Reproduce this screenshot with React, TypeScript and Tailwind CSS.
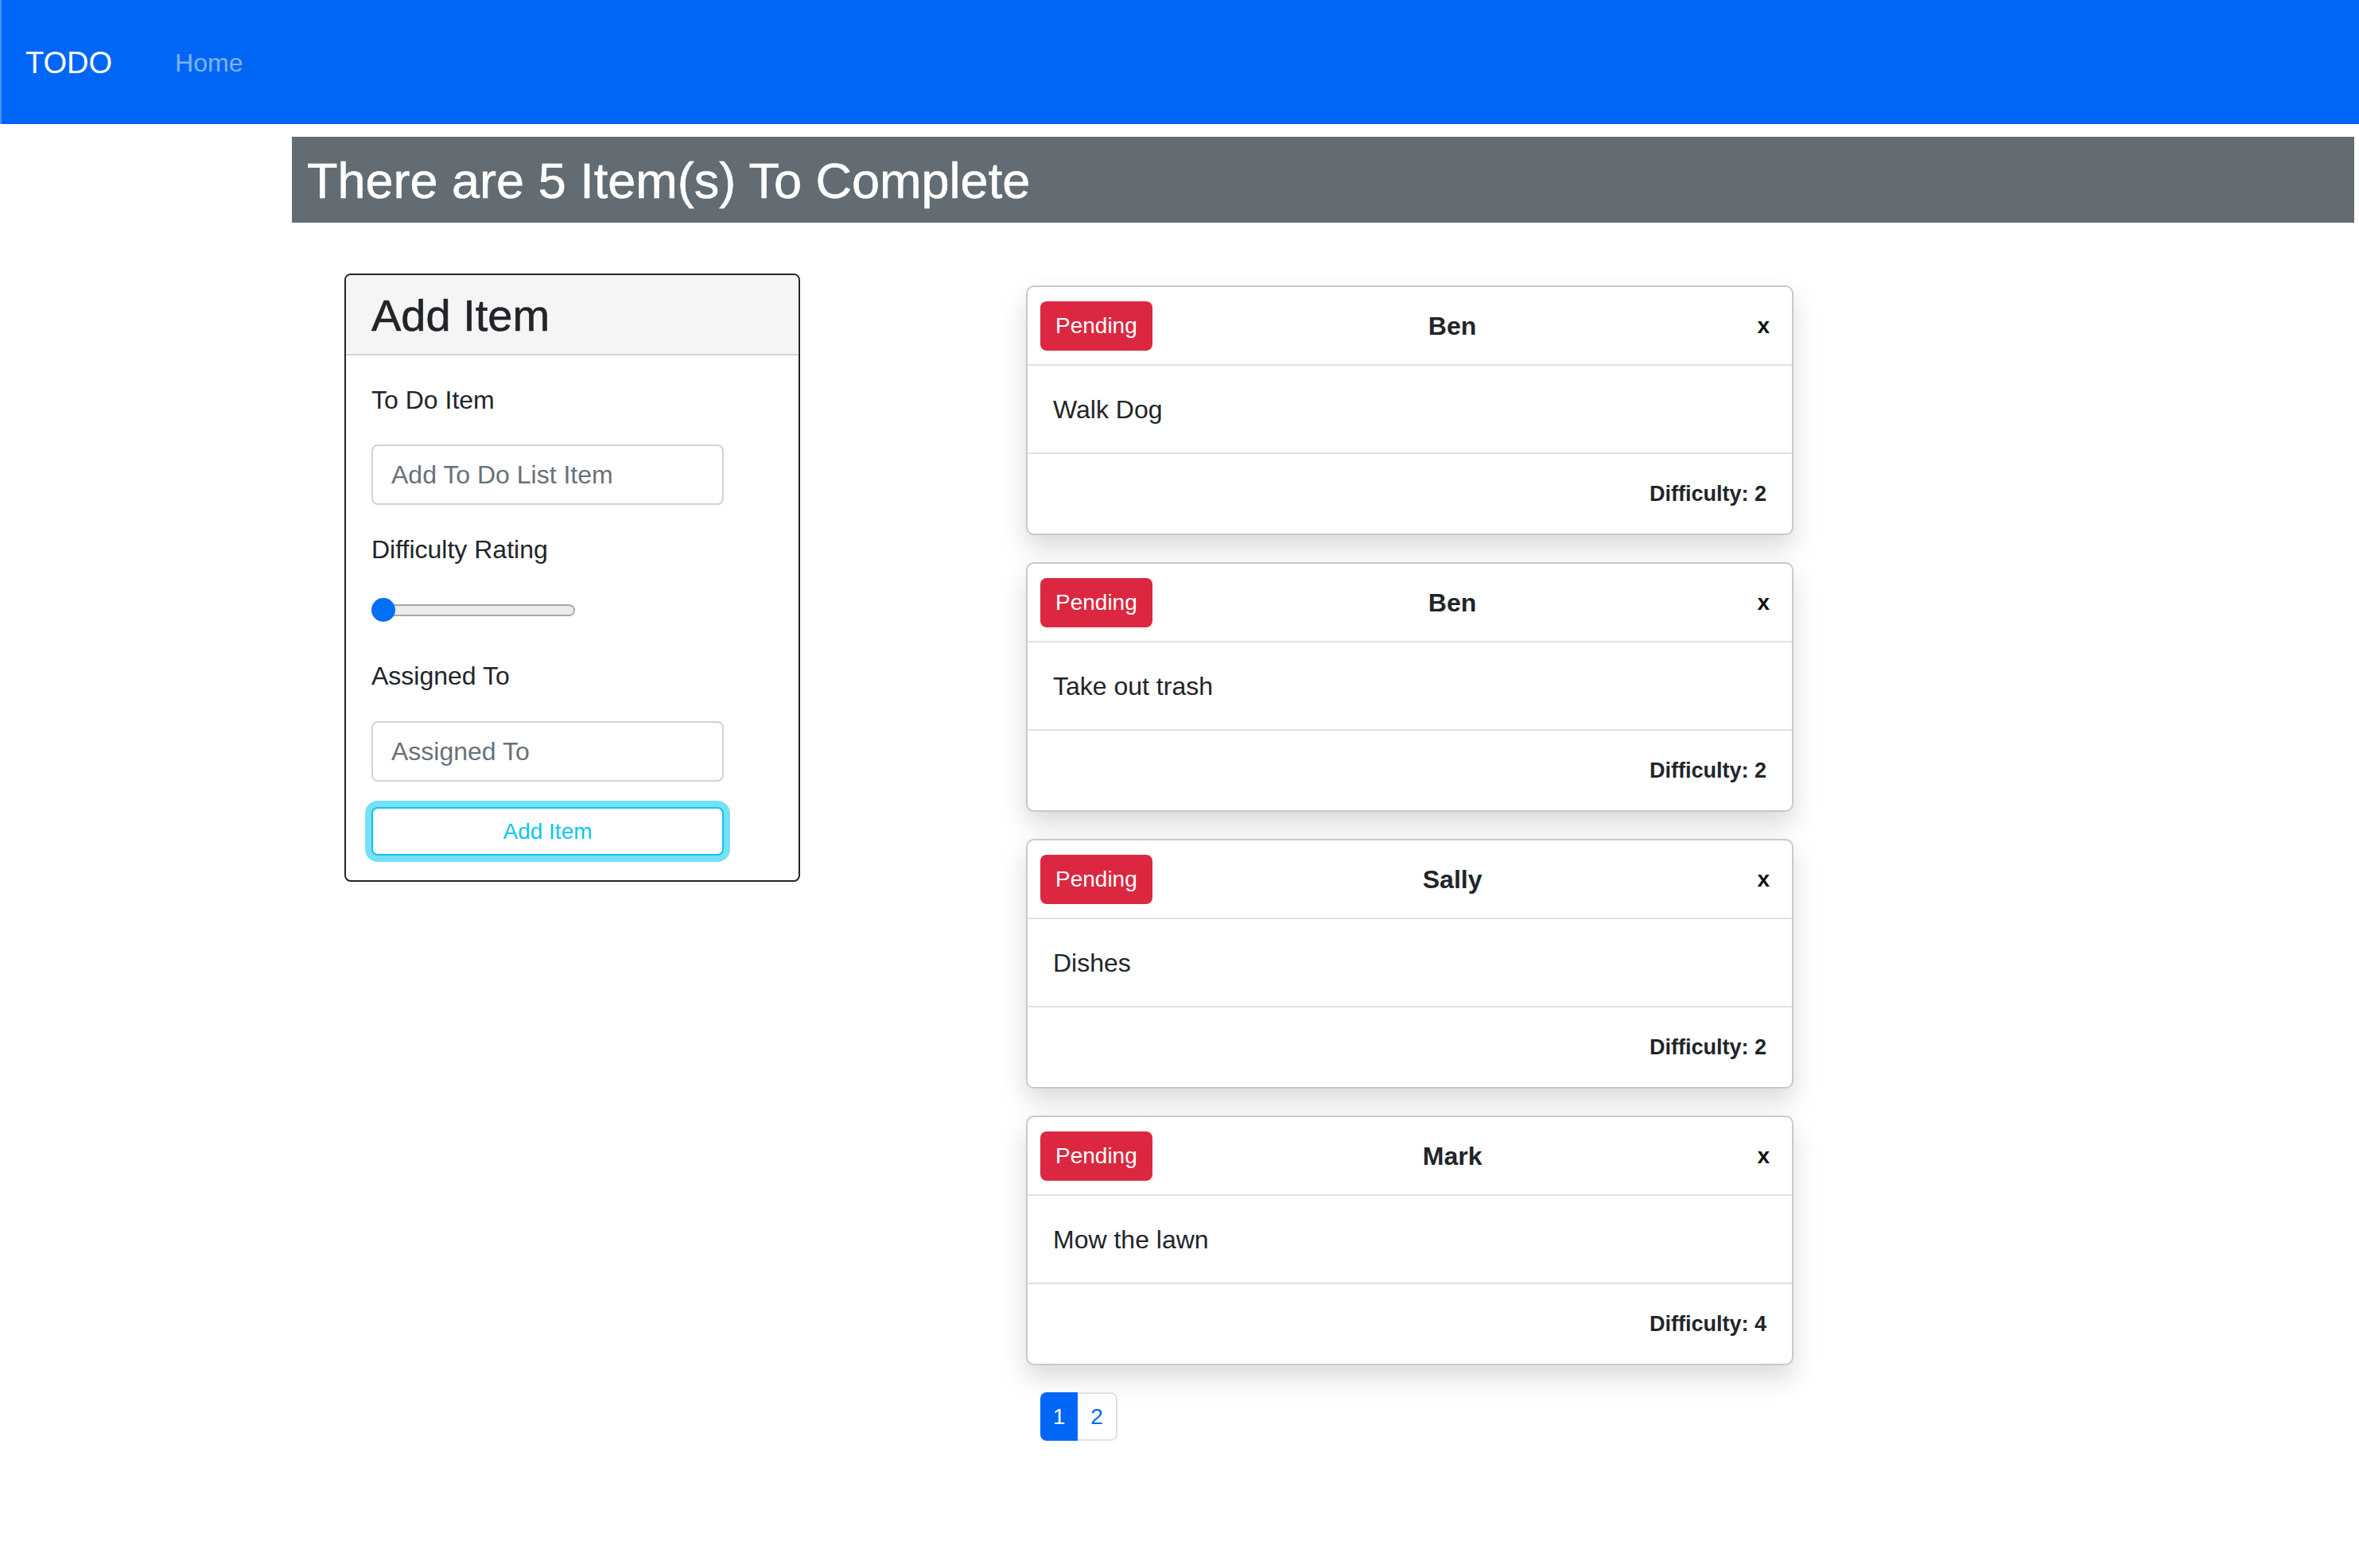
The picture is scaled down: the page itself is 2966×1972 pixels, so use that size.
import React from 'react';

const todos = [
  { id: 1, assignee: 'Ben', text: 'Walk Dog', difficulty: 2 },
  { id: 2, assignee: 'Ben', text: 'Take out trash', difficulty: 2 },
  { id: 3, assignee: 'Sally', text: 'Dishes', difficulty: 2 },
  { id: 4, assignee: 'Mark', text: 'Mow the lawn', difficulty: 4 },
];

function TodoCard({ assignee, text, difficulty }: { assignee: string; text: string; difficulty: number }) {
  return (
    <div className="w-[965px] h-[314px] bg-white border-2 border-[#c9c9c9] rounded-[10px] shadow-[0_16px_32px_rgba(0,0,0,0.15)] flex flex-col">
      {/* header: status badge, assignee, close */}
      <div className="h-[99px] flex items-center justify-between pl-4 pr-[28px] border-b-2 border-[#dee2e6]">
        <span className="h-[62px] px-[19px] flex items-center bg-[#dc2741] text-white text-[28px] rounded-[8px]">
          Pending
        </span>
        <span className="text-[32px] font-bold text-[#212529] pr-[6px]">{assignee}</span>
        <span className="text-[28px] font-bold text-[#111] leading-none">x</span>
      </div>
      <div className="h-[111px] flex items-center px-8 border-b-2 border-[#dee2e6]">
        <span className="text-[32px] text-[#212529]">{text}</span>
      </div>
      <div className="flex-1 flex items-center justify-end px-8">
        <span className="text-[27px] font-bold text-[#212529]">Difficulty: {difficulty}</span>
      </div>
    </div>
  );
}

export default function App() {
  return (
    <div className="min-h-[1972px] bg-white text-[#212529]" style={{ fontFamily: '"Liberation Sans", Arial, sans-serif' }}>
      {/* Navbar */}
      <nav className="h-[156px] bg-[#0066f5] border-l-2 border-[#4b91f7] flex items-center pl-[30px] pt-[2px]">
        <span className="text-[38px] text-white">TODO</span>
        <span className="ml-[79px] text-[32px] text-white/50">Home</span>
      </nav>

      {/* Count header */}
      <div className="mt-[16px] ml-[367px] mr-[6px] h-[108px] bg-[#626c72] flex items-center pl-[19px] pt-[2px]">
        <h1 className="text-[63px] text-white leading-none [-webkit-text-stroke:0.6px_white]">There are 5 Item(s) To Complete</h1>
      </div>

      <div className="flex items-start pl-[433px] mt-[64px]">
        {/* Add item form */}
        <div className="w-[573px] border-2 border-[#212529] rounded-[8px] overflow-hidden">
          <div className="h-[101px] bg-[#f5f5f5] border-b-2 border-[#d4d4d4] flex items-center px-8 pt-[2px]">
            <h3 className="text-[56px] font-medium text-[#212529] leading-none [-webkit-text-stroke:0.6px_#212529]">Add Item</h3>
          </div>
          <div className="px-8 pt-8 pb-[31px] flex flex-col">
            <label className="text-[32px] leading-[48px]">To Do Item</label>
            <div className="mt-8 w-[443px] h-[76px] border-2 border-[#ced4da] rounded-[8px] flex items-center px-[23px]">
              <span className="text-[32px] text-[#68717a]">Add To Do List Item</span>
            </div>
            <label className="mt-8 text-[32px] leading-[48px]">Difficulty Rating</label>
            <div className="mt-[36px] h-[32px] w-[256px] relative flex items-center">
              <div className="w-full h-[15px] rounded-full bg-[#ebebeb] border-2 border-[#a8a8a8]" />
              <div className="absolute left-0 top-[1px] w-[30px] h-[30px] rounded-full bg-[#0070f8]" />
            </div>
            <label className="mt-[43px] text-[32px] leading-[48px]">Assigned To</label>
            <div className="mt-[33px] w-[443px] h-[76px] border-2 border-[#ced4da] rounded-[8px] flex items-center px-[23px]">
              <span className="text-[32px] text-[#68717a]">Assigned To</span>
            </div>
            <button
              type="button"
              className="mt-8 w-[443px] h-[61px] border-2 border-[#0bc6ef] rounded-[8px] ring-[8px] ring-[#74e1f4] text-[28px] text-[#0bc6ef] bg-white"
            >
              Add Item
            </button>
          </div>
        </div>

        {/* Todo list */}
        <div className="ml-[284px] mt-[15px] flex flex-col gap-[34px]">
          {todos.map(t => (
            <TodoCard key={t.id} assignee={t.assignee} text={t.text} difficulty={t.difficulty} />
          ))}
          <div className="ml-[18px] flex h-[61px]">
            <span className="w-[47px] flex items-center justify-center bg-[#0066f5] text-white text-[28px] rounded-l-[8px]">1</span>
            <span className="w-[50px] flex items-center justify-center border-2 border-l-0 border-[#dee2e6] text-[#0066f5] text-[28px] rounded-r-[8px]">2</span>
          </div>
        </div>
      </div>
    </div>
  );
}
